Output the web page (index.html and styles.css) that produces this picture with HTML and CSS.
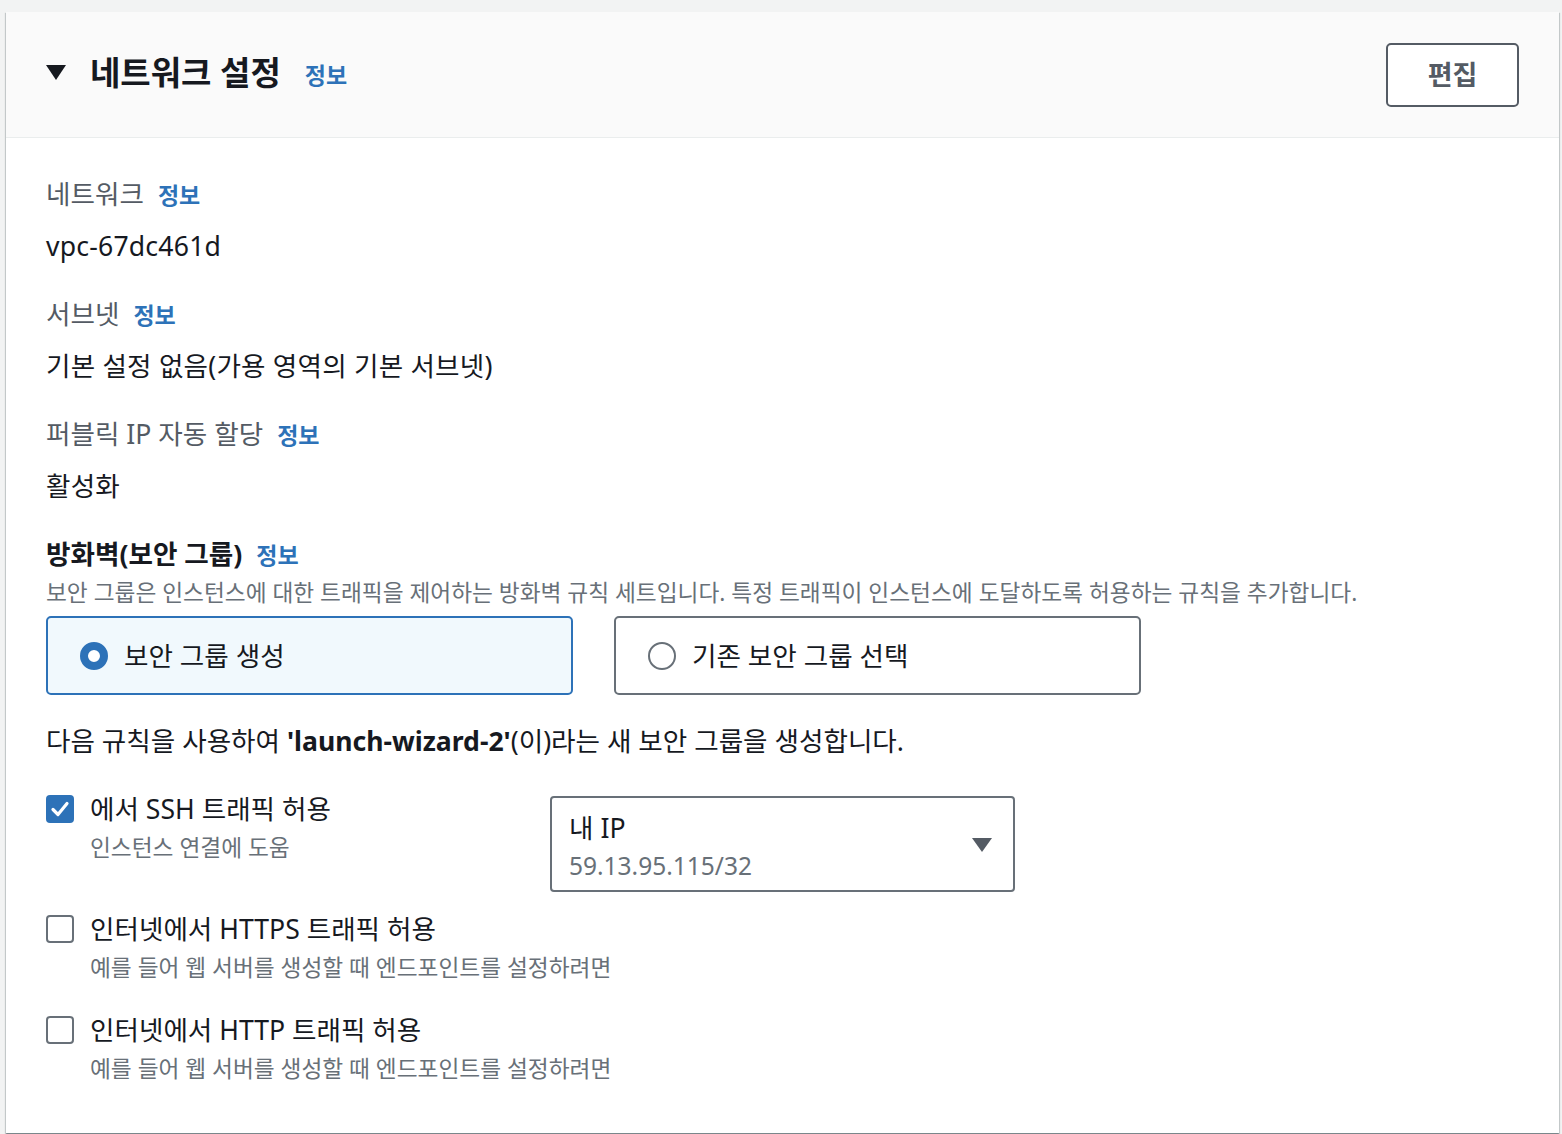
FILE: index.html
```html
<!DOCTYPE html>
<html lang="ko">
<head>
<meta charset="utf-8">
<title>네트워크 설정</title>
<link rel="stylesheet" href="styles.css">
</head>
<body>
<div class="card">
  <div class="card-header">
    <div class="title">
      <svg class="caret" width="20" height="15" viewBox="0 0 20 15"><polygon points="0,0 20,0 10,15" fill="#16191f"/></svg>
      <h2>네트워크 설정</h2>
      <a class="info head-info">정보</a>
    </div>
    <button class="btn">편집</button>
  </div>
  <div class="card-body">
    <div class="field">
      <div class="label">네트워크<a class="info">정보</a></div>
      <div class="value">vpc-67dc461d</div>
    </div>
    <div class="field">
      <div class="label">서브넷<a class="info">정보</a></div>
      <div class="value">기본 설정 없음(가용 영역의 기본 서브넷)</div>
    </div>
    <div class="field">
      <div class="label">퍼블릭 IP 자동 할당<a class="info">정보</a></div>
      <div class="value">활성화</div>
    </div>
    <div class="field firewall">
      <div class="label strong">방화벽(보안 그룹)<a class="info">정보</a></div>
      <div class="desc">보안 그룹은 인스턴스에 대한 트래픽을 제어하는 방화벽 규칙 세트입니다. 특정 트래픽이 인스턴스에 도달하도록 허용하는 규칙을 추가합니다.</div>
      <div class="tiles">
        <div class="tile selected"><span class="radio on"></span><span>보안 그룹 생성</span></div>
        <div class="tile"><span class="radio"></span><span>기존 보안 그룹 선택</span></div>
      </div>
    </div>
    <p class="rule-text">다음 규칙을 사용하여 <b>'launch-wizard-2'</b>(이)라는 새 보안 그룹을 생성합니다.</p>
    <div class="rule-row first">
      <div class="check-col fixed">
        <div class="check"><span class="box on"><svg width="28" height="28" viewBox="0 0 28 28"><polyline points="7,14.5 12,19.5 21,8.5" fill="none" stroke="#fff" stroke-width="3.2" stroke-linecap="round" stroke-linejoin="round"/></svg></span><span>에서 SSH 트래픽 허용</span></div>
        <div class="sub">인스턴스 연결에 도움</div>
      </div>
      <div class="select">
        <div class="select-text">
          <div class="sel-main">내 IP</div>
          <div class="sel-sub">59.13.95.115/32</div>
        </div>
        <svg class="sel-caret" width="20" height="14" viewBox="0 0 20 14"><polygon points="0,0 20,0 10,14" fill="#545b64"/></svg>
      </div>
    </div>
    <div class="rule-row second">
      <div class="check-col">
        <div class="check"><span class="box"></span><span>인터넷에서 HTTPS 트래픽 허용</span></div>
        <div class="sub">예를 들어 웹 서버를 생성할 때 엔드포인트를 설정하려면</div>
      </div>
    </div>
    <div class="rule-row third">
      <div class="check-col">
        <div class="check"><span class="box"></span><span>인터넷에서 HTTP 트래픽 허용</span></div>
        <div class="sub">예를 들어 웹 서버를 생성할 때 엔드포인트를 설정하려면</div>
      </div>
    </div>
  </div>
</div>
</body>
</html>
```

FILE: styles.css
```css
* { box-sizing: border-box; }
html, body { margin: 0; padding: 0; }
body {
  background: #f2f3f3;
  font-family: "Noto Sans", "Noto Sans CJK KR", sans-serif;
  color: #16191f;
  padding: 12px 3px 2px 6px;
}
.card {
  background: #fff;
  box-shadow: 0 1px 1px 0 rgba(0,28,36,.3), 1px 1px 1px 0 rgba(0,28,36,.15), -1px 1px 1px 0 rgba(0,28,36,.15);
  min-height: 1120px;
}
.card-header {
  background: #fafafa;
  border-bottom: 1px solid #eaeded;
  height: 126px;
  padding: 0 40px;
  display: flex;
  align-items: center;
  justify-content: space-between;
}
.title { display: flex; align-items: center; margin-bottom: 4px; }
.caret { margin-right: 24px; }
h2 {
  margin: 0;
  font-size: 33px;
  font-weight: 700;
  line-height: 40px;
}
.info {
  color: #2d72b8;
  font-weight: 700;
  font-size: 23px;
  line-height: 1;
  margin-left: 14px;
}
.head-info { margin-left: 24px; position: relative; top: 3px; }
.btn {
  width: 133px;
  height: 64px;
  border: 2px solid #545b64;
  border-radius: 5px;
  background: #fff;
  color: #545b64;
  font-family: inherit;
  font-size: 27px;
  font-weight: 700;
  line-height: 1;
  padding: 0;
}
.card-body {
  padding: 36px 40px 49px 40px;
}
.field + .field { margin-top: 28px; }
.label {
  font-size: 26.6px;
  line-height: 40px;
  height: 40px;
  color: #545b64;
}
.label.strong { color: #16191f; font-weight: 700; }
.value {
  font-size: 26.6px;
  line-height: 40px;
  margin-top: 12px;
  letter-spacing: 0.2px;
}
.desc {
  font-size: 22.7px;
  line-height: 30px;
  color: #687078;
  margin-top: 4px;
  white-space: nowrap;
}
.tiles {
  display: grid;
  grid-template-columns: 527px 527px;
  gap: 41px;
  margin-top: 8px;
}
.tile {
  height: 79px;
  border: 2px solid #687078;
  border-radius: 5px;
  padding: 0 32px;
  display: flex;
  align-items: center;
  gap: 16px;
  font-size: 26.6px;
  line-height: 40px;
}
.tile.selected { border-color: #2d72b8; background: #f1f9fd; }
.radio {
  width: 28px; height: 28px;
  border-radius: 50%;
  border: 2px solid #687078;
  background: #fff;
  flex: none;
}
.radio.on { border: 8px solid #2d72b8; }
.rule-text {
  margin: 26px 0 0;
  font-size: 26.6px;
  line-height: 40px;
}
.rule-text b { font-weight: 700; }
.rule-row { display: flex; align-items: flex-start; }
.rule-row.first { margin-top: 28px; }
.rule-row.second { margin-top: 17px; }
.rule-row.third { margin-top: 27px; }
.check-col.fixed { width: 504px; flex: none; }
.check {
  display: flex;
  align-items: center;
  gap: 16px;
  font-size: 26.6px;
  line-height: 40px;
}
.box {
  width: 28px; height: 28px;
  border: 2px solid #687078;
  border-radius: 4px;
  flex: none;
  display: block;
}
.box.on { border: none; background: #2d72b8; }
.box svg { display: block; }
.sub {
  margin-left: 44px;
  margin-top: 4px;
  font-size: 22.7px;
  line-height: 30px;
  color: #687078;
  white-space: nowrap;
}
.select {
  width: 465px;
  height: 96px;
  margin-top: 7px;
  border: 2px solid #687078;
  border-radius: 4px;
  padding: 10px 21px 8px 17px;
  display: flex;
  align-items: center;
  justify-content: space-between;
}
.select-text { align-self: flex-start; }
.sel-main { font-size: 26.6px; line-height: 40px; }
.sel-sub { font-size: 24.5px; line-height: 30px; color: #687078; margin-top: 3px; }
```
